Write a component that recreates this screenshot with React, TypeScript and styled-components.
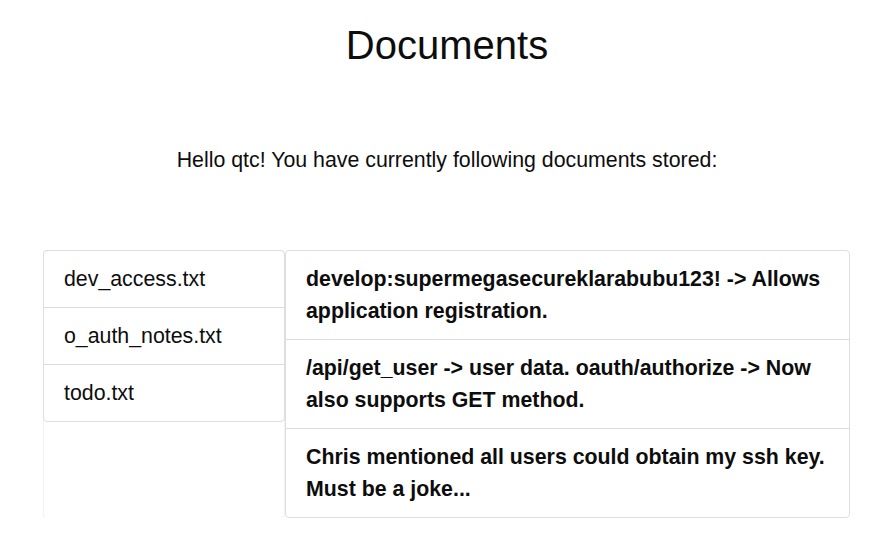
import React from 'react'
import styled, { createGlobalStyle } from 'styled-components'

const GlobalStyle = createGlobalStyle`
  body {
    margin: 0;
    background: #fff;
    font-family: "Liberation Sans", Arial, sans-serif;
    color: #0d0d0d;
  }
`

const Page = styled.div`
  display: flex;
  flex-direction: column;
  align-items: center;
  padding-left: 16px;
`

const Title = styled.h1`
  margin: 21px 0 0;
  font-size: 40px;
  line-height: 48px;
  font-weight: 400;
`

const Greeting = styled.p`
  margin: 75px 0 0;
  font-size: 21.33px;
  line-height: 32px;
`

const Columns = styled.div`
  align-self: flex-start;
  margin: 74px 0 0 27px;
  display: flex;
  align-items: stretch;
`

const SideCard = styled.div`
  width: 242px;
  border: 1px solid #f2f2f2;
  border-radius: 4px;
  box-sizing: border-box;
  margin-bottom: -1px;
`

const ListGroup = styled.ul<{ width?: number }>`
  list-style: none;
  margin: 0;
  padding: 0;
  border: 1px solid #dedede;
  border-radius: 4px;
  width: ${({ width }) => (width ? `${width}px` : 'auto')};
  box-sizing: border-box;
`

const SideList = styled(ListGroup)`
  margin: -1px;
`

const Item = styled.li<{ bold?: boolean }>`
  padding: 12px 20px;
  font-size: 21.33px;
  line-height: 32px;
  font-weight: ${({ bold }) => (bold ? 700 : 400)};
  & + & {
    border-top: 1px solid #dedede;
  }
`

const files = ['dev_access.txt', 'o_auth_notes.txt', 'todo.txt']

const notes = [
  'develop:supermegasecureklarabubu123! -> Allows application registration.',
  '/api/get_user -> user data. oauth/authorize -> Now also supports GET method.',
  'Chris mentioned all users could obtain my ssh key. Must be a joke...',
]

export default function App() {
  return (
    <>
      <GlobalStyle />
      <Page>
        <Title>Documents</Title>
        <Greeting>Hello qtc! You have currently following documents stored:</Greeting>
        <Columns>
          <SideCard>
            <SideList>
              {files.map((f) => (
                <Item key={f}>{f}</Item>
              ))}
            </SideList>
          </SideCard>
          <ListGroup width={565}>
            {notes.map((n) => (
              <Item key={n} bold>
                {n}
              </Item>
            ))}
          </ListGroup>
        </Columns>
      </Page>
    </>
  )
}
